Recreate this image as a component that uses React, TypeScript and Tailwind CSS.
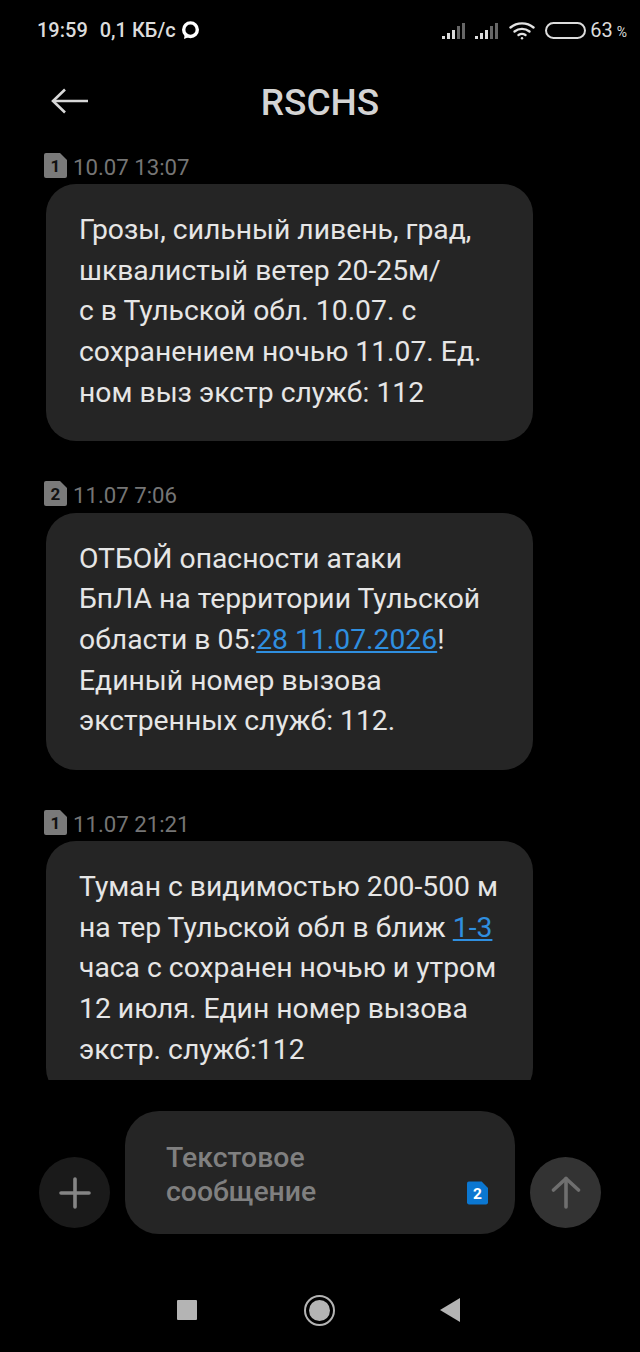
import { ReactNode } from 'react'

type Message = {
  sim: number
  date: string
  lines: ReactNode[]
}

const MESSAGES: Message[] = [
  {
    sim: 1,
    date: '10.07 13:07',
    lines: [
      'Грозы, сильный ливень, град,',
      'шквалистый ветер 20-25м/',
      'с в Тульской обл. 10.07. с',
      'сохранением ночью 11.07. Ед.',
      'ном выз экстр служб: 112',
    ],
  },
  {
    sim: 2,
    date: '11.07 7:06',
    lines: [
      'ОТБОЙ опасности атаки',
      'БпЛА на территории Тульской',
      <>области в 05:<span className="text-[#2f8fe0] underline">28 11.07.2026</span>!</>,
      'Единый номер вызова',
      'экстренных служб: 112.',
    ],
  },
  {
    sim: 1,
    date: '11.07 21:21',
    lines: [
      'Туман с видимостью 200-500 м',
      <>на тер Тульской обл в ближ <span className="text-[#2f8fe0] underline">1-3</span></>,
      'часа с сохранен ночью и утром',
      '12 июля. Един номер вызова',
      'экстр. служб:112',
    ],
  },
]

function SimIcon({ n, bg, fg, className }: { n: number; bg: string; fg: string; className: string }) {
  return (
    <svg viewBox="0 0 23 25" className={className}>
      <path d="M2 0h14l7 7v16a2 2 0 0 1-2 2H2a2 2 0 0 1-2-2V2a2 2 0 0 1 2-2z" fill={bg} />
      <text x="11.5" y="19" textAnchor="middle" fontSize="17" fontWeight="700" fontFamily="Roboto, sans-serif" fill={fg}>{n}</text>
    </svg>
  )
}

function SignalIcon() {
  return (
    <svg width="25" height="17" viewBox="0 0 25 17">
      <rect x="0" y="14" width="3" height="3" fill="#ddd" />
      <rect x="5" y="11" width="3" height="6" fill="#ddd" />
      <rect x="10" y="8" width="3" height="9" fill="#ddd" />
      <rect x="15" y="4" width="3" height="13" fill="#666" />
      <rect x="20" y="1" width="3" height="16" fill="#666" />
    </svg>
  )
}

function StatusBar() {
  return (
    <div className="h-[60px] shrink-0 flex items-center justify-between pl-[37px] pr-[13px] text-[#dcdcdc]">
      <div className="flex items-center text-[20px] font-medium">
        <span>19:59</span>
        <span className="ml-[12px]">0,1 КБ/с</span>
        <svg width="19" height="19" viewBox="0 0 19 19" className="ml-[5px]">
          <circle cx="9.5" cy="8.7" r="6.8" fill="none" stroke="#fff" strokeWidth="3.4" />
          <path d="M3 18l1-6 4 4z" fill="#fff" />
        </svg>
      </div>
      <div className="flex items-center">
        <SignalIcon />
        <div className="ml-[8px]"><SignalIcon /></div>
        <svg width="26" height="19" viewBox="0 0 26 19" fill="none" stroke="#e4e4e4" strokeWidth="2.4" strokeLinecap="round" className="ml-[9px]">
          <path d="M1.5 6.5C8 1 18 1 24.5 6.5" />
          <path d="M5.5 10.5C10 7 16 7 20.5 10.5" />
          <path d="M9.5 14C11.5 12.7 14.5 12.7 16.5 14" />
          <circle cx="13" cy="17.2" r="1.2" fill="#e4e4e4" stroke="none" />
        </svg>
        <div className="ml-[10px] w-[41px] h-[17px] rounded-full border-2 border-[#dcdcdc]" />
        <span className="ml-[4px] text-[20px] font-normal">63</span>
        <span className="ml-[4px] text-[14px] mt-[4px]">%</span>
      </div>
    </div>
  )
}

function Header() {
  return (
    <div className="relative h-[93px] shrink-0 flex items-start justify-center">
      <svg width="38" height="26" viewBox="0 0 38 26" fill="none" stroke="#d8d8d8" strokeWidth="2.6" className="absolute left-[51px] top-[28px]">
        <path d="M37 13H2" />
        <path d="M14 1.5L2 13l12 11.5" />
      </svg>
      <h1 className="text-[37px] font-medium text-[#d4d4d4] leading-none mt-[24px]">RSCHS</h1>
    </div>
  )
}

function MessageBlock({ message }: { message: Message }) {
  return (
    <div className="h-[328.5px] shrink-0">
      <div className="flex items-center h-[28px] pl-[44px] text-[#757575] text-[22.2px] leading-none">
        <SimIcon n={message.sim} bg="#7a7a7a" fg="#111" className="w-[23px] h-[25px] -mt-[4px]" />
        <span className="ml-[6px]">{message.date}</span>
      </div>
      <div className="mt-[3px] ml-[46px] w-[487px] h-[257px] rounded-[30px] bg-[#252525] pl-[33px] pt-[26px] text-[28.3px] leading-[40.7px] text-[#e6e6e6] whitespace-nowrap">
        {message.lines.map((line, i) => (
          <div key={i}>{line}</div>
        ))}
      </div>
    </div>
  )
}

function Composer() {
  return (
    <div className="flex items-end h-[123px] mt-[31px] shrink-0 pl-[39px]">
      <div className="mb-[6px] w-[71px] h-[71px] rounded-full bg-[#1a1a1a] flex items-center justify-center">
        <svg width="32" height="32" viewBox="0 0 32 32" stroke="#858585" strokeWidth="3.6" strokeLinecap="round">
          <path d="M16 2v28M2 16h28" />
        </svg>
      </div>
      <div className="relative ml-[15px] w-[390px] h-[123px] rounded-[34px] bg-[#252525] pl-[41px] pt-[30px] text-[28.4px] font-medium leading-[34px] text-[#808080]">
        <div>Текстовое</div>
        <div>сообщение</div>
        <SimIcon n={2} bg="#0b77d1" fg="#fff" className="absolute left-[342px] top-[70px] w-[21px] h-[24px]" />
      </div>
      <div className="ml-[15px] mb-[6px] w-[71px] h-[71px] rounded-full bg-[#333333] flex items-center justify-center">
        <svg width="30" height="33" viewBox="0 0 30 33" fill="none" stroke="#6f6f6f" strokeWidth="3.6" strokeLinecap="round" strokeLinejoin="round">
          <path d="M15 31V2.5" />
          <path d="M2.5 14L15 2.5 27.5 14" />
        </svg>
      </div>
    </div>
  )
}

function NavBar() {
  return (
    <div className="flex-1 relative">
      <div className="flex items-center h-[32px] mt-[60px] pl-[177px]">
        <div className="w-[20px] h-[20px] rounded-[1px] bg-[#b4b4b4]" />
        <div className="ml-[107px] w-[31px] h-[31px] rounded-full border-[2px] border-[#b4b4b4] flex items-center justify-center">
          <div className="w-[21px] h-[21px] rounded-full bg-[#b4b4b4]" />
        </div>
        <svg width="20" height="24" viewBox="0 0 20 24" className="ml-[105px]">
          <path d="M20 0v24L0 12z" fill="#b4b4b4" />
        </svg>
      </div>
    </div>
  )
}

export default function App() {
  return (
    <div className="w-[640px] h-[1352px] bg-black flex flex-col overflow-hidden font-['Roboto',sans-serif]">
      <StatusBar />
      <Header />
      <div className="h-[927px] shrink-0 overflow-hidden">
        {MESSAGES.map((m, i) => (
          <MessageBlock key={i} message={m} />
        ))}
      </div>
      <Composer />
      <NavBar />
    </div>
  )
}
